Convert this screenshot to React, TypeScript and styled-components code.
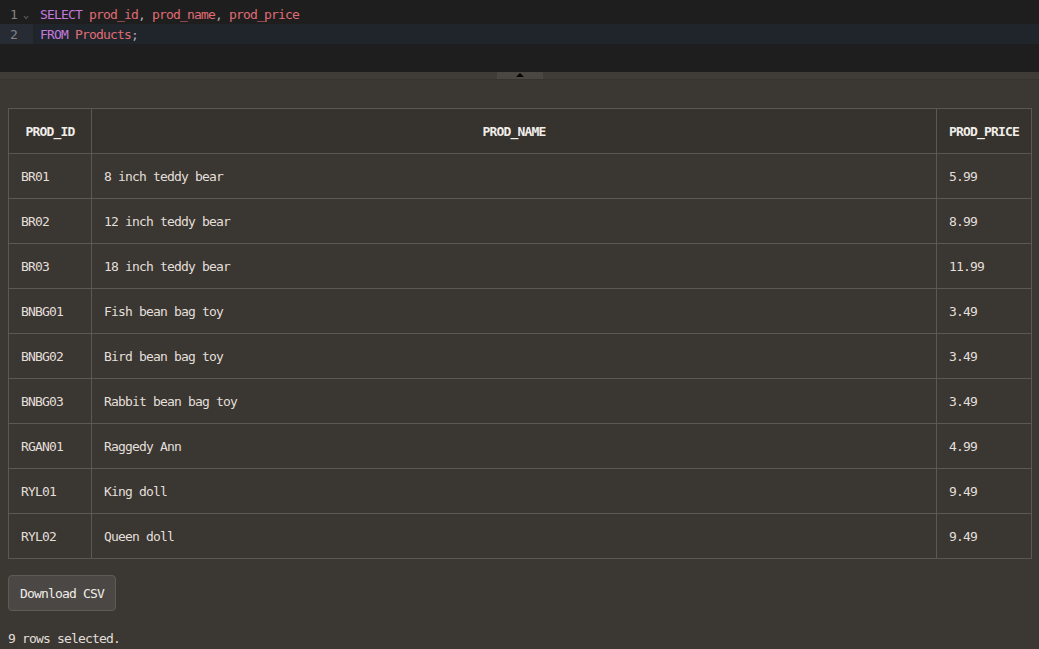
import React from "react";
import styled, { createGlobalStyle } from "styled-components";

const Global = createGlobalStyle`
  html, body { margin: 0; padding: 0; background: #3b3732; }
  body { font-family: "DejaVu Sans Mono", monospace; }
`;

const MONO = `"DejaVu Sans Mono", "Liberation Mono", monospace`;

const Page = styled.div`
  width: 1039px;
  height: 649px;
  overflow: hidden;
  display: flex;
  flex-direction: column;
  background: #3b3732;
  font-family: ${MONO};
  font-size: 13px;
  letter-spacing: -0.83px;
  color: #e2dfda;
`;

const Editor = styled.div`
  height: 72px;
  background: #1e1e1e;
  padding-top: 4px;
  box-sizing: border-box;
`;

const Line = styled.div<{ $active?: boolean }>`
  display: flex;
  height: 20px;
  align-items: center;
  background: ${(p) => (p.$active ? "#1f252b" : "transparent")};
`;

const Gutter = styled.div<{ $active?: boolean }>`
  width: 33px;
  height: 100%;
  display: flex;
  align-items: center;
  box-sizing: border-box;
  padding-left: 10px;
  color: #858585;
  background: ${(p) => (p.$active ? "#272c34" : "transparent")};
  flex-shrink: 0;
`;

const Fold = styled.span`
  margin-left: 6px;
  font-size: 10px;
  letter-spacing: 0;
  color: #7a7a7a;
`;

const Code = styled.div`
  padding-left: 7px;
  white-space: pre;
`;

const Kw = styled.span`
  color: #c678dd;
`;
const Id = styled.span`
  color: #e06c75;
`;
const Punct = styled.span`
  color: #a8adb5;
`;

const Splitter = styled.div`
  height: 7px;
  background: #3f3b36;
  border-bottom: 1px solid #37332f;
  display: flex;
  justify-content: center;
`;

const Handle = styled.div`
  width: 46px;
  height: 7px;
  background: #4a4641;
  display: flex;
  justify-content: center;
  align-items: center;
`;

const Tri = styled.div`
  width: 0;
  height: 0;
  border-left: 4px solid transparent;
  border-right: 4px solid transparent;
  border-bottom: 4px solid #050505;
  margin-top: -2px;
`;

const Body = styled.div`
  padding: 28px 7px 0 8px;
  display: flex;
  flex-direction: column;
  align-items: flex-start;
`;

const Table = styled.table`
  width: 1024px;
  border-collapse: collapse;
  border: 1px solid #5b5751;
  table-layout: fixed;
`;

const Th = styled.th<{ $w?: number; $center?: boolean }>`
  ${(p) => (p.$w ? `width: ${p.$w}px;` : "")}
  height: 45px;
  box-sizing: border-box;
  padding: 0 12px;
  text-align: ${(p) => (p.$center ? "center" : "left")};
  font-weight: bold;
  color: #f0ede8;
  background: #36322e;
  border: 1px solid #5b5751;
`;

const Td = styled.td`
  height: 45px;
  box-sizing: border-box;
  padding: 0 12px;
  border: 1px solid #5b5751;
  background: #3a3631;
  color: #e2dfda;
`;

const Button = styled.button`
  margin-top: 16px;
  height: 36px;
  padding: 0 11px;
  background: #4a4744;
  border: 1px solid #5e5a56;
  border-radius: 4px;
  color: #f0ede8;
  font-family: ${MONO};
  font-size: 13px;
  letter-spacing: -0.83px;
`;

const Status = styled.div`
  margin-top: 20px;
  color: #e2dfda;
`;

const rows: [string, string, string][] = [
  ["BR01", "8 inch teddy bear", "5.99"],
  ["BR02", "12 inch teddy bear", "8.99"],
  ["BR03", "18 inch teddy bear", "11.99"],
  ["BNBG01", "Fish bean bag toy", "3.49"],
  ["BNBG02", "Bird bean bag toy", "3.49"],
  ["BNBG03", "Rabbit bean bag toy", "3.49"],
  ["RGAN01", "Raggedy Ann", "4.99"],
  ["RYL01", "King doll", "9.49"],
  ["RYL02", "Queen doll", "9.49"],
];

export default function App() {
  return (
    <Page>
      <Global />
      <Editor>
        <Line>
          <Gutter>
            1<Fold>⌄</Fold>
          </Gutter>
          <Code>
            <Kw>SELECT</Kw> <Id>prod_id</Id>
            <Punct>,</Punct> <Id>prod_name</Id>
            <Punct>,</Punct> <Id>prod_price</Id>
          </Code>
        </Line>
        <Line $active>
          <Gutter $active>2</Gutter>
          <Code>
            <Kw>FROM</Kw> <Id>Products</Id>
            <Punct>;</Punct>
          </Code>
        </Line>
      </Editor>
      <Splitter>
        <Handle>
          <Tri />
        </Handle>
      </Splitter>
      <Body>
        <Table>
          <thead>
            <tr>
              <Th $w={83} $center>PROD_ID</Th>
              <Th $center>PROD_NAME</Th>
              <Th $w={95} $center>PROD_PRICE</Th>
            </tr>
          </thead>
          <tbody>
            {rows.map((r) => (
              <tr key={r[0]}>
                <Td>{r[0]}</Td>
                <Td>{r[1]}</Td>
                <Td>{r[2]}</Td>
              </tr>
            ))}
          </tbody>
        </Table>
        <Button>Download CSV</Button>
        <Status>9 rows selected.</Status>
      </Body>
    </Page>
  );
}
